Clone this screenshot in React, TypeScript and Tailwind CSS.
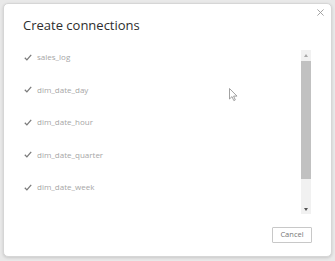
import React from 'react';

const tables = ['sales_log', 'dim_date_day', 'dim_date_hour', 'dim_date_quarter', 'dim_date_week'];

const Check = () => (
  <svg width="8" height="7" viewBox="0 0 8 7" className="shrink-0">
    <path d="M0.8 3.8 L2.9 5.9 L7.2 0.9" fill="none" stroke="#7a7a7a" strokeWidth="1.3" />
  </svg>
);

export default function App() {
  return (
    <div
      className="w-[335px] h-[261px] bg-[#e9e9e9] p-[3px] pb-[4px] relative overflow-hidden"
      style={{ fontFamily: '"Open Sans", "Liberation Sans", sans-serif' }}
    >
      {/* Dialog */}
      <div className="relative h-full w-full bg-white rounded-[5px] border border-[#d6d6d6] shadow-[0_1px_3px_rgba(0,0,0,0.15)] flex flex-col">
        <button className="absolute right-[7px] top-[5px]">
          <svg width="7" height="7" viewBox="0 0 7 7">
            <path d="M0.4 0.4 L6.6 6.6 M6.6 0.4 L0.4 6.6" stroke="#9a9a9a" strokeWidth="0.9" />
          </svg>
        </button>

        <h3 className="pl-[19px] pt-[11px] text-[13px] font-medium leading-[20px] text-[#2e2e2e]">
          Create connections
        </h3>

        <div className="flex items-start mt-[6px] pl-[20px] pr-[20px]">
          {/* List */}
          <div className="flex-1 flex flex-col">
            {tables.map((t) => (
              <div key={t} className="flex items-center gap-[5px] h-[32.5px]">
                <Check />
                <span className="text-[8px] text-[#a6a6a6] leading-none">{t}</span>
              </div>
            ))}
          </div>

          {/* Scrollbar */}
          <div className="w-[10px] h-[164px] mt-[9px] bg-[#f1f1f1] flex flex-col items-center">
            <div className="h-[10px] flex items-center justify-center">
              <div className="w-0 h-0 border-l-[2.5px] border-r-[2.5px] border-b-[3px] border-l-transparent border-r-transparent border-b-[#a8a8a8]" />
            </div>
            <div className="w-[10px] h-[118px] mt-[1px] bg-[#c1c1c1]" />
            <div className="flex-1" />
            <div className="h-[10px] flex items-center justify-center">
              <div className="w-0 h-0 border-l-[2.5px] border-r-[2.5px] border-t-[3px] border-l-transparent border-r-transparent border-t-[#555]" />
            </div>
          </div>
        </div>

        <div className="flex justify-end pr-[19px] mt-[13px]">
          <button className="w-[40px] h-[16px] border border-[#c8c8c8] rounded-[1px] bg-white text-[7.5px] text-[#777] leading-none">
            Cancel
          </button>
        </div>

        {/* Mouse pointer */}
        <svg className="absolute left-[225px] top-[84px]" width="9" height="14" viewBox="0 0 9 14">
          <path d="M0.5 0.5 L0.5 11 L3 8.6 L4.8 12.6 L6.3 11.9 L4.6 8.1 L8 8.1 Z" fill="white" stroke="#8a8a8a" strokeWidth="0.8" />
        </svg>
      </div>
    </div>
  );
}
